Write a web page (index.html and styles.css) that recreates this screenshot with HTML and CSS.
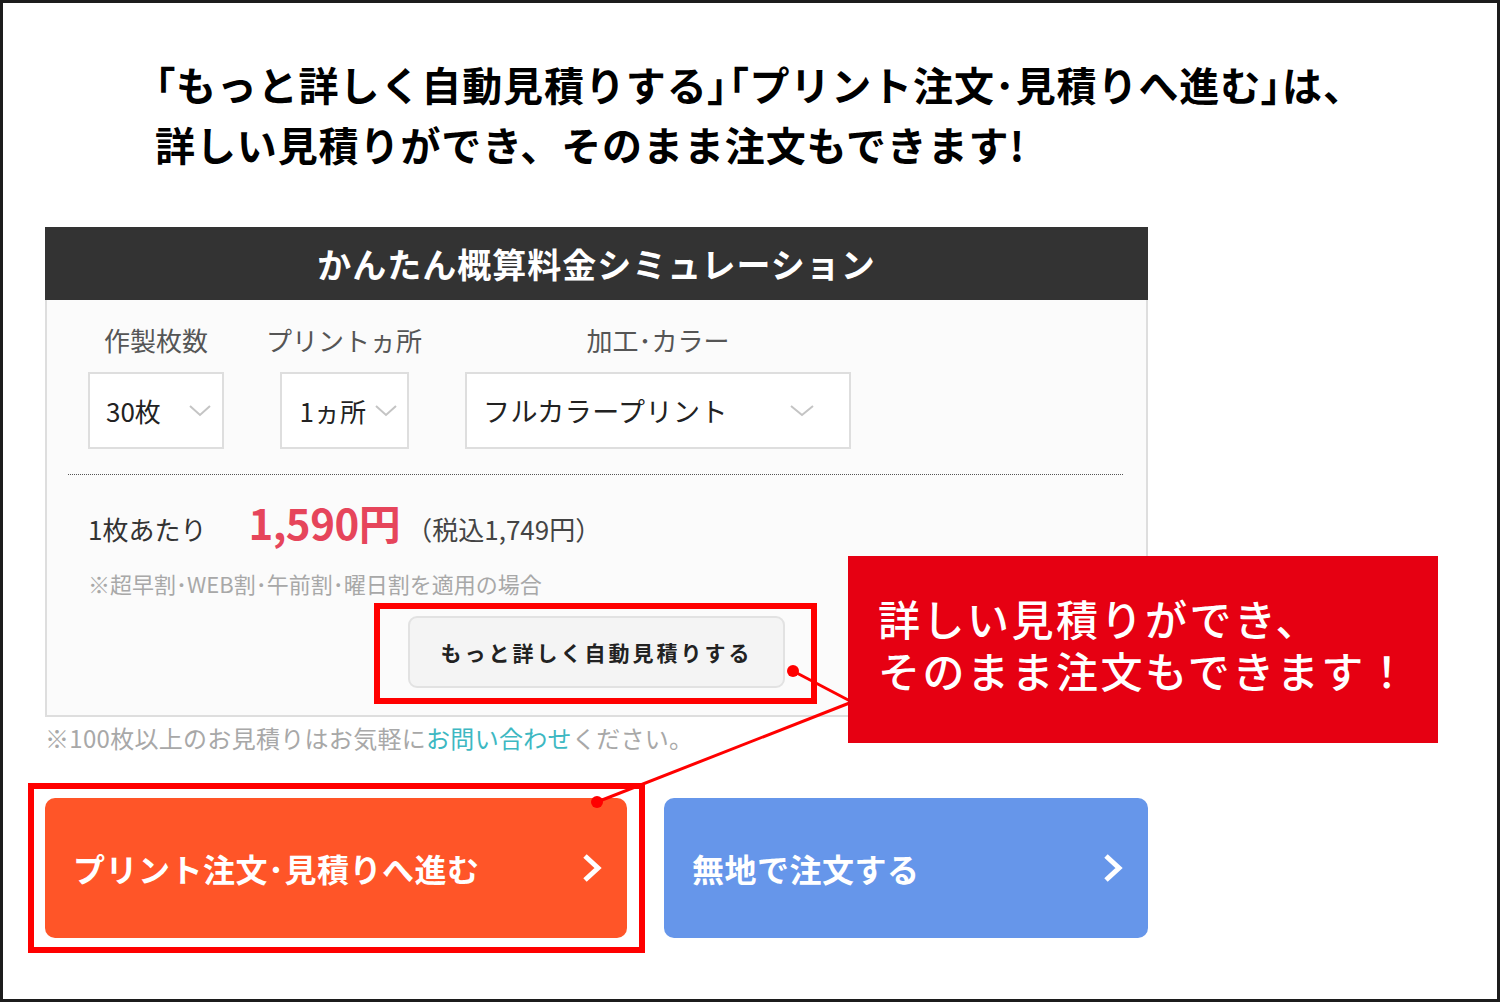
FILE: index.html
```html
<!DOCTYPE html>
<html lang="ja">
<head>
  <meta charset="UTF-8" />
  <meta name="viewport" content="width=device-width, initial-scale=1" />
  <title>かんたん概算料金シミュレーション</title>
  <link rel="stylesheet" href="styles.css">
</head>
<body>
  <div class="frame">
    <h1 class="lead"><span class="tight">「</span>もっと詳しく自動見積りする<span class="tight">」「</span>プリント注文･見積りへ進む<span class="tight">」</span>は、<br>詳しい見積りができ、そのまま注文もできます!</h1>

    <section class="sim">
      <h2 class="sim-title">かんたん概算料金シミュレーション</h2>
      <div class="sim-body">
        <div class="fields">
          <div class="field field-qty">
            <span class="field-label">作製枚数</span>
            <div class="select select-qty">30枚
              <svg width="22" height="12" viewBox="0 0 22 12"><polyline points="1,1 11,10 21,1" fill="none" stroke="#c4c4c4" stroke-width="2"/></svg>
            </div>
          </div>
          <div class="field field-side">
            <span class="field-label">プリントヵ所</span>
            <div class="select select-side">1ヵ所
              <svg width="22" height="12" viewBox="0 0 22 12"><polyline points="1,1 11,10 21,1" fill="none" stroke="#c4c4c4" stroke-width="2"/></svg>
            </div>
          </div>
          <div class="field field-color">
            <span class="field-label">加工･カラー</span>
            <div class="select select-color">フルカラープリント
              <svg width="24" height="12" viewBox="0 0 24 12"><polyline points="1,1 12,10 23,1" fill="none" stroke="#c4c4c4" stroke-width="2"/></svg>
            </div>
          </div>
        </div>

        <div class="sep"></div>

        <div class="price-row">
          <span class="per">1枚あたり</span>
          <span class="price">1,590円</span>
          <span class="tax">（税込1,749円）</span>
        </div>
        <p class="price-note">※超早割･WEB割･午前割･曜日割を適用の場合</p>

        <div class="more">
          <a class="more-btn" href="#">もっと詳しく自動見積りする</a>
        </div>
      </div>
    </section>

    <p class="contact-note">※100枚以上のお見積りはお気軽に<a href="#">お問い合わせ</a>ください。</p>

    <div class="actions">
      <a class="action action-print" href="#">
        <span>プリント注文･見積りへ進む</span>
        <svg width="22" height="32" viewBox="0 0 22 32"><polyline points="4,4 17,16 4,28" fill="none" stroke="#fff" stroke-width="5"/></svg>
      </a>
      <a class="action action-plain" href="#">
        <span>無地で注文する</span>
        <svg width="22" height="32" viewBox="0 0 22 32"><polyline points="4,4 17,16 4,28" fill="none" stroke="#fff" stroke-width="5"/></svg>
      </a>
    </div>

    <!-- annotation overlay -->
    <svg class="marks" width="1500" height="1002" viewBox="0 0 1500 1002">
      <rect x="377" y="606" width="437" height="95" fill="none" stroke="#ff0000" stroke-width="6"/>
      <rect x="31" y="786" width="611" height="164" fill="none" stroke="#ff0000" stroke-width="6"/>
      <line x1="793" y1="671" x2="852" y2="702" stroke="#ff0000" stroke-width="3"/>
      <line x1="852" y1="702" x2="597" y2="802" stroke="#ff0000" stroke-width="3"/>
      <circle cx="793" cy="671" r="6" fill="#ff0000"/>
      <circle cx="597" cy="802" r="6" fill="#ff0000"/>
    </svg>

    <div class="callout">詳しい見積りができ、<br>そのまま注文もできます！</div>
  </div>
</body>
</html>
```

FILE: styles.css
```css
* {
  margin: 0;
  padding: 0;
  box-sizing: border-box;
}
html, body {
  width: 1500px;
  height: 1002px;
  background: #fff;
  font-family: "Noto Sans CJK JP", "Noto Sans", sans-serif;
  color: #222;
  overflow: hidden;
}
a {
  text-decoration: none;
}
.frame {
  position: relative;
  width: 1500px;
  height: 1002px;
  border: 3px solid #1c1c1c;
  padding: 51px 0 0 42px;
}
.lead {
  margin-left: 110px;
  font-size: 40px;
  line-height: 60px;
  font-weight: 700;
  color: #000;
  letter-spacing: 0.9px;
}
.lead .tight {
  font-feature-settings: "palt";
}

/* simulator */
.sim {
  width: 1103px;
  margin-top: 53px;
}
.sim-title {
  height: 73px;
  background: #333;
  color: #fff;
  font-size: 34px;
  font-weight: 700;
  line-height: 73px;
  text-align: center;
  letter-spacing: 1px;
}
.sim-body {
  background: #fbfbfb;
  border: 2px solid #dedede;
  border-top: 0;
  padding: 25px 41px 27px 41px;
}
.fields {
  display: flex;
}
.field {
  display: flex;
  flex-direction: column;
  align-items: center;
}
.field-qty { width: 136px; }
.field-side { width: 160px; margin-left: 40px; }
.field-color { width: 386px; margin-left: 41px; }
.field-label {
  font-size: 26px;
  line-height: 30px;
  color: #555;
  margin-bottom: 17px;
}
.select {
  height: 77px;
  background: #fff;
  border: 2px solid #dedede;
  display: flex;
  align-items: center;
  justify-content: space-between;
  font-size: 26px;
  color: #222;
  padding-left: 16px;
}
.select-qty { width: 136px; padding-right: 11px; }
.select-side { width: 129px; padding-left: 18px; padding-right: 10px; }
.select-color { width: 386px; padding-right: 35px; font-size: 27px; letter-spacing: 0.5px; }
.sep {
  margin: 25px -18px 0 -20px;
  border-top: 1px dotted #555;
}
.price-row {
  margin-top: 22px;
  display: flex;
  align-items: baseline;
  line-height: 50px;
}
.per {
  font-size: 26px;
  color: #333;
}
.price {
  margin-left: 42px;
  font-size: 42px;
  font-weight: 700;
  color: #e6455b;
  letter-spacing: -0.5px;
}
.tax {
  margin-left: 6px;
  font-size: 26px;
  color: #444;
}
.price-note {
  margin-top: 15px;
  font-size: 22px;
  line-height: 28px;
  color: #a8a8a8;
}
.more {
  margin-top: 19px;
  display: flex;
  justify-content: center;
}
.more-btn {
  width: 377px;
  height: 72px;
  display: flex;
  align-items: center;
  justify-content: center;
  background: #f4f4f4;
  border: 2px solid #e2e2e2;
  border-radius: 9px;
  font-size: 21px;
  font-weight: 700;
  color: #222;
  letter-spacing: 3px;
}

.contact-note {
  margin-top: 6px;
  font-size: 24px;
  line-height: 30px;
  color: #a8a8a8;
  letter-spacing: 0.3px;
}
.contact-note a {
  color: #3db8c2;
}

/* action buttons */
.actions {
  margin-top: 45px;
  display: flex;
  gap: 37px;
}
.action {
  height: 140px;
  border-radius: 10px;
  display: flex;
  align-items: center;
  justify-content: space-between;
  padding: 0 24px 0 28px;
  color: #fff;
  font-size: 32px;
  font-weight: 700;
  letter-spacing: 0.5px;
}
.action-print {
  width: 582px;
  background: #ff5528;
}
.action-plain {
  width: 484px;
  background: #6696ea;
}

/* annotations */
.marks {
  position: absolute;
  left: -3px;
  top: -3px;
  pointer-events: none;
}
.callout {
  position: absolute;
  left: 845px;
  top: 553px;
  width: 590px;
  height: 187px;
  background: #e60012;
  color: #fff;
  font-size: 42px;
  font-weight: 500;
  line-height: 52px;
  letter-spacing: 2.5px;
  padding: 36px 0 0 30px;
}
```
